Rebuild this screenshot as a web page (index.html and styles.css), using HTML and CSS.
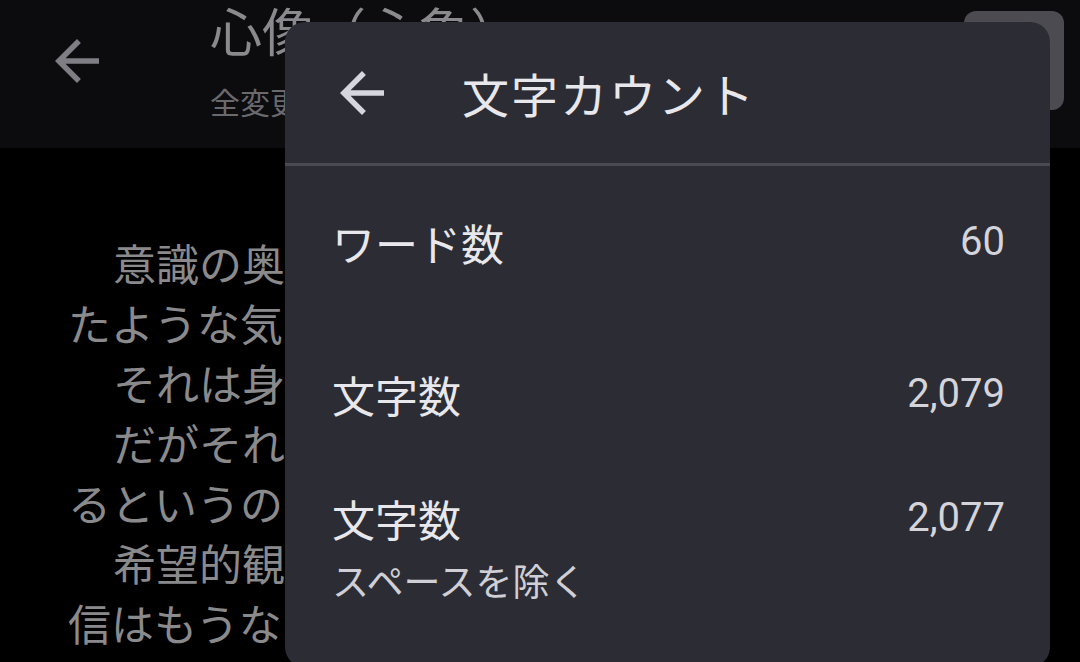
FILE: index.html
```html
<!DOCTYPE html>
<html lang="ja">

<head>
    <meta charset="UTF-8">
    <meta name="viewport" content="width=device-width, initial-scale=1.0">
    <title>文字カウント</title>

    <link rel="stylesheet" href="styles.css">

</head>

<body>

<div class="topbar">
    <svg class="back" viewBox="0 0 24 24"><path d="M20 11H7.83l5.59-5.59L12 4l-8 8 8 8 1.41-1.41L7.83 13H20v-2z"/></svg>
    <div class="doc-title">
        <div class="name">心像（心象）</div>
        <div class="status">全変更を保存しました</div>
    </div>
    <div class="action"></div>
</div>

<div class="page">
    <div class="line indent">意識の奥底に沈んでいた何かが</div>
    <div class="line">たような気がした。</div>
    <div class="line indent">それは身に覚えのない記憶</div>
    <div class="line indent">だがそれが自分のものだと</div>
    <div class="line">るというのも事実だった。</div>
    <div class="line indent">希望的観測にすがるほどの</div>
    <div class="line">信はもうない。</div>
</div>

<div class="dialog">
    <div class="dialog-header">
        <svg class="back" viewBox="0 0 24 24"><path d="M20 11H7.83l5.59-5.59L12 4l-8 8 8 8 1.41-1.41L7.83 13H20v-2z"/></svg>
        <h2>文字カウント</h2>
    </div>
    <div class="stats">
        <div class="row first">
            <div class="label">ワード数</div>
            <div class="value">60</div>
        </div>
        <div class="row second">
            <div class="label">文字数</div>
            <div class="value">2,079</div>
        </div>
        <div class="row third">
            <div>
                <div class="label">文字数</div>
                <div class="note">スペースを除く</div>
            </div>
            <div class="value">2,077</div>
        </div>
    </div>
</div>

</body>
</html>
```

FILE: styles.css
```css
body {
    font-family: "Noto Sans CJK JP", "Noto Sans", sans-serif;
    background: #000;
    margin: 0;
    width: 1080px;
    height: 662px;
    overflow: hidden;
    position: relative;
}

.topbar {
    background: #0c0c0e;
    height: 148px;
    display: flex;
    align-items: flex-start;
}

.topbar .back {
    width: 66px;
    height: 66px;
    margin: 28px 0 0 44px;
    fill: #7e7e84;
    flex-shrink: 0;
}

.doc-title {
    margin-left: 100px;
    margin-top: -2px;
    white-space: nowrap;
}

.doc-title .name {
    font-size: 52px;
    line-height: 64px;
    color: #8a8a8e;
}

.doc-title .status {
    font-size: 30px;
    line-height: 40px;
    margin-top: 19px;
    color: #6a6a6e;
}

.action {
    margin: 11px 16px 0 auto;
    width: 100px;
    height: 99px;
    border-radius: 12px;
    background: #4b4b51;
    flex-shrink: 0;
}

.page {
    padding: 84px 0 0 68px;
    font-size: 43px;
    line-height: 60px;
    color: #8a8a8c;
    white-space: nowrap;
}

.line.indent {
    padding-left: 45px;
}

.dialog {
    position: absolute;
    left: 285px;
    top: 22px;
    width: 765px;
    height: 645px;
    background: #2c2c34;
    border-radius: 20px;
    color: #e6e6ea;
}

.dialog-header {
    height: 144px;
    display: flex;
    align-items: center;
    box-sizing: border-box;
    border-bottom: 3px solid #4a4a54;
}

.dialog-header .back {
    width: 66px;
    height: 66px;
    margin-left: 44px;
    fill: #d6d6de;
}

.dialog-header h2 {
    margin: 0 0 0 67px;
    font-size: 47px;
    font-weight: normal;
    line-height: 60px;
    letter-spacing: 2px;
    color: #e8e8ec;
}

.stats {
    padding: 0 45px 0 47px;
}

.row {
    display: flex;
    justify-content: space-between;
    align-items: flex-start;
}

.row.first {
    margin-top: 54px;
}

.row.second {
    margin-top: 108px;
}

.row.third {
    margin-top: 80px;
}

.label {
    font-size: 43px;
    line-height: 44px;
    color: #e8e8ec;
}

.value {
    font-family: Roboto, "Noto Sans", sans-serif;
    font-size: 40px;
    line-height: 44px;
    color: #d4d4da;
}

.note {
    font-size: 37px;
    line-height: 40px;
    margin-top: 20px;
    color: #cfcfd5;
}
```
